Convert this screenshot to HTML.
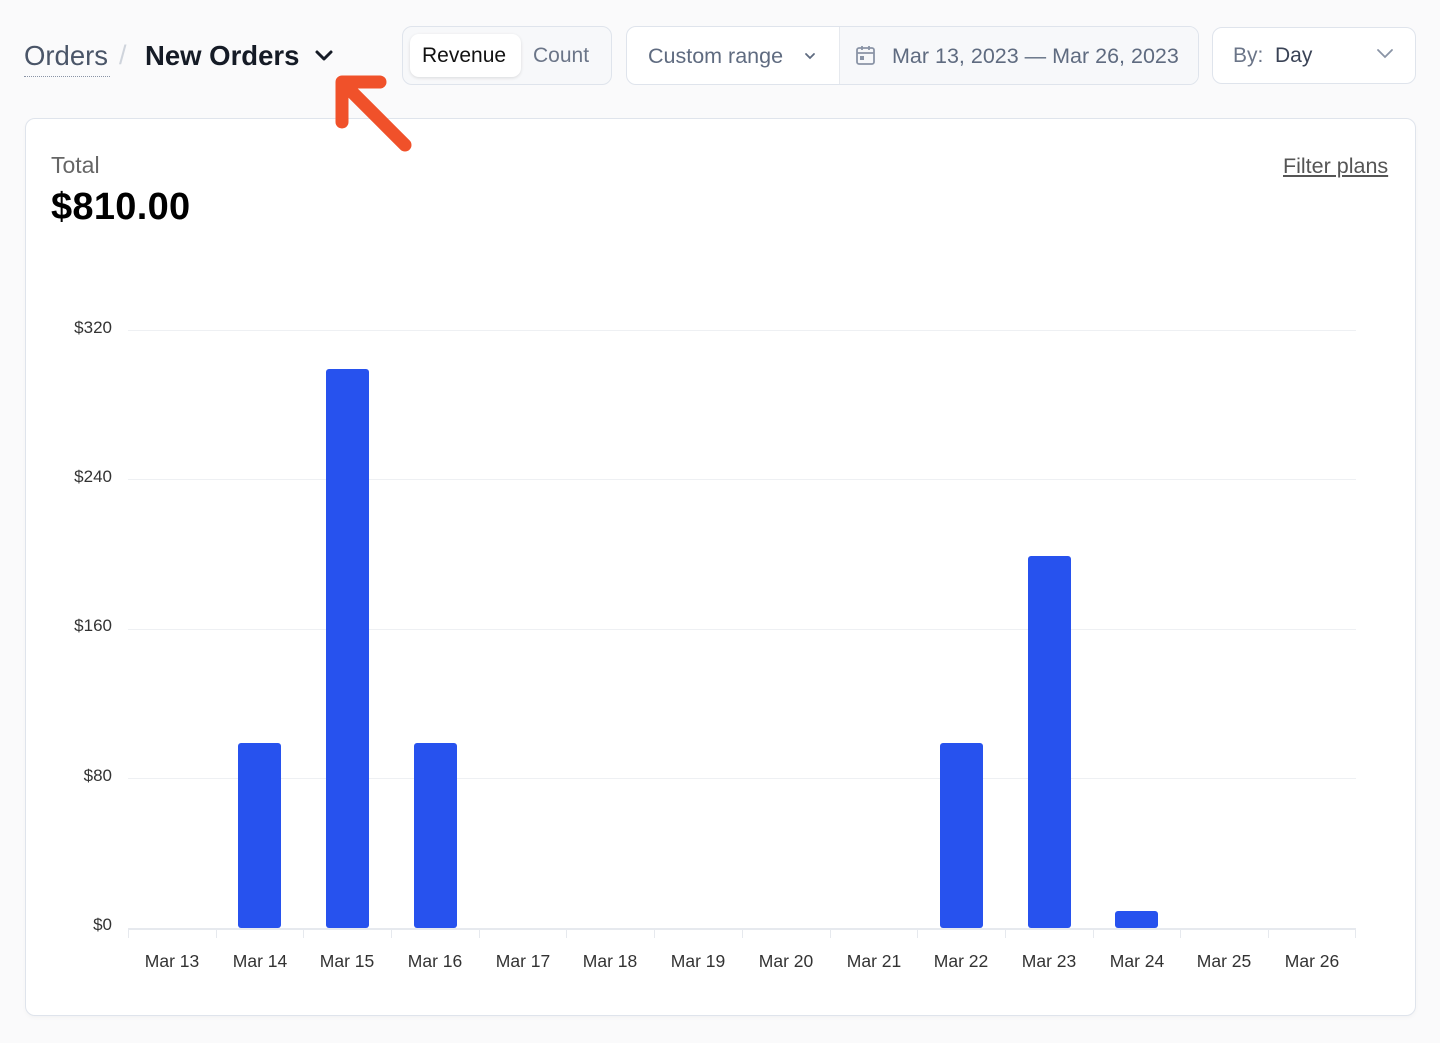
<!DOCTYPE html>
<html><head><meta charset="utf-8"><style>
*{box-sizing:border-box;margin:0;padding:0}
body{width:1440px;height:1043px;background:#fafafb;font-family:"Liberation Sans",sans-serif;position:relative;overflow:hidden}
.a{position:absolute}
.box{position:absolute;border:1.5px solid #dfe4ec;border-radius:10px;background:#fff}
.t{position:absolute;white-space:nowrap}
.yl{position:absolute;right:1328px;font-size:17px;color:#333;}
.grid{position:absolute;left:128px;width:1228px;height:1px;background:#eef0f3}
.bar{position:absolute;width:43px;background:#2752ee;border-radius:3px}
.xl{position:absolute;top:951px;font-size:17.5px;color:#333;width:88px;text-align:center}
.tick{position:absolute;top:928px;width:1px;height:10px;background:#e6e9ee}
</style></head><body>
<div class="t" style="left:24px;top:40px;font-size:27.5px;color:#4a5568">Orders</div>
<div class="a" style="left:24px;top:76px;width:86px;border-top:1.5px dotted #8a94a6"></div>
<div class="t" style="left:119px;top:40px;font-size:27px;color:#cfd4dc">/</div>
<div class="t" style="left:145px;top:40px;font-size:27.5px;font-weight:bold;color:#151b26">New Orders</div>
<svg class="a" style="left:314px;top:48px" width="20" height="16" viewBox="0 0 20 16"><path d="M3 4l7 7 7-7" fill="none" stroke="#151b26" stroke-width="3" stroke-linecap="round" stroke-linejoin="round"/></svg>

<div class="box" style="left:402px;top:26px;width:210px;height:59px;background:#f7f8fa"></div>
<div class="a" style="left:410px;top:34px;width:111px;height:43px;background:#fff;border-radius:9px;box-shadow:0 1px 3px rgba(0,0,0,.12)"></div>
<div class="t" style="left:422px;top:44px;font-size:21px;color:#111">Revenue</div>
<div class="t" style="left:533px;top:44px;font-size:21px;color:#6b7588">Count</div>

<div class="box" style="left:626px;top:26px;width:573px;height:59px"></div>
<div class="a" style="left:839px;top:27px;width:359px;height:57px;background:#f7f8fa;border-left:1px solid #e6e9ee;border-radius:0 9px 9px 0"></div>
<div class="t" style="left:648px;top:44px;font-size:21.5px;color:#5f6b80">Custom range</div>
<svg class="a" style="left:803px;top:50px" width="14" height="12"><path d="M3 4l4 4 4-4" fill="none" stroke="#5f6b80" stroke-width="1.8" stroke-linecap="round"/></svg>
<svg class="a" style="left:855px;top:44px" width="22" height="22" viewBox="0 0 22 22"><rect x="2" y="4" width="17" height="16" rx="2" fill="none" stroke="#8a94a6" stroke-width="1.8"/><path d="M2 9h17M7 2v4M14 2v4" stroke="#8a94a6" stroke-width="1.8"/><rect x="5" y="12" width="4" height="4" fill="#8a94a6"/></svg>
<div class="t" style="left:892px;top:44px;font-size:21.5px;color:#5f6b80">Mar 13, 2023 — Mar 26, 2023</div>

<div class="box" style="left:1212px;top:27px;width:204px;height:57px"></div>
<div class="t" style="left:1233px;top:44px;font-size:21px;color:#6b7588">By:</div>
<div class="t" style="left:1275px;top:44px;font-size:21px;color:#3a4356">Day</div>
<svg class="a" style="left:1375px;top:46px" width="20" height="16"><path d="M3 4l7 7 7-7" fill="none" stroke="#8a94a6" stroke-width="1.8" stroke-linecap="round"/></svg>

<div class="box" style="left:25px;top:118px;width:1391px;height:898px;box-shadow:0 2px 4px rgba(0,0,0,.03)"></div>
<div class="t" style="left:51px;top:152px;font-size:23px;color:#666">Total</div>
<div class="t" style="left:51px;top:186px;font-size:38px;font-weight:bold;color:#000;letter-spacing:0.3px">$810.00</div>
<div class="t" style="left:1283px;top:154px;font-size:21.5px;color:#555;text-decoration:underline">Filter plans</div>

<div class="grid" style="top:330px"></div><div class="grid" style="top:479px"></div><div class="grid" style="top:629px"></div><div class="grid" style="top:778px"></div><div class="grid" style="top:928px;height:2px;background:#e6e9ee"></div>
<div class="yl" style="top:318px">$320</div><div class="yl" style="top:467px">$240</div><div class="yl" style="top:616px">$160</div><div class="yl" style="top:766px">$80</div><div class="yl" style="top:915px">$0</div>

<div class="bar" style="left:238px;top:743px;height:185px"></div>
<div class="bar" style="left:326px;top:369px;height:559px"></div>
<div class="bar" style="left:414px;top:743px;height:185px"></div>
<div class="bar" style="left:940px;top:743px;height:185px"></div>
<div class="bar" style="left:1028px;top:556px;height:372px"></div>
<div class="bar" style="left:1115px;top:911px;height:17px"></div>

<div class="tick" style="left:128px"></div><div class="tick" style="left:216px"></div><div class="tick" style="left:303px"></div><div class="tick" style="left:391px"></div><div class="tick" style="left:479px"></div><div class="tick" style="left:566px"></div><div class="tick" style="left:654px"></div><div class="tick" style="left:742px"></div><div class="tick" style="left:830px"></div><div class="tick" style="left:917px"></div><div class="tick" style="left:1005px"></div><div class="tick" style="left:1093px"></div><div class="tick" style="left:1180px"></div><div class="tick" style="left:1268px"></div><div class="tick" style="left:1355px"></div>

<div class="xl" style="left:128px">Mar 13</div><div class="xl" style="left:216px">Mar 14</div><div class="xl" style="left:303px">Mar 15</div><div class="xl" style="left:391px">Mar 16</div><div class="xl" style="left:479px">Mar 17</div><div class="xl" style="left:566px">Mar 18</div><div class="xl" style="left:654px">Mar 19</div><div class="xl" style="left:742px">Mar 20</div><div class="xl" style="left:830px">Mar 21</div><div class="xl" style="left:917px">Mar 22</div><div class="xl" style="left:1005px">Mar 23</div><div class="xl" style="left:1093px">Mar 24</div><div class="xl" style="left:1180px">Mar 25</div><div class="xl" style="left:1268px">Mar 26</div>

<svg class="a" style="left:330px;top:70px;z-index:5" width="85" height="85" viewBox="0 0 85 85"><path d="M12 52V12h38M13 13l62 62" fill="none" stroke="#f0512a" stroke-width="13" stroke-linecap="round" stroke-linejoin="round"/></svg>
</body></html>
